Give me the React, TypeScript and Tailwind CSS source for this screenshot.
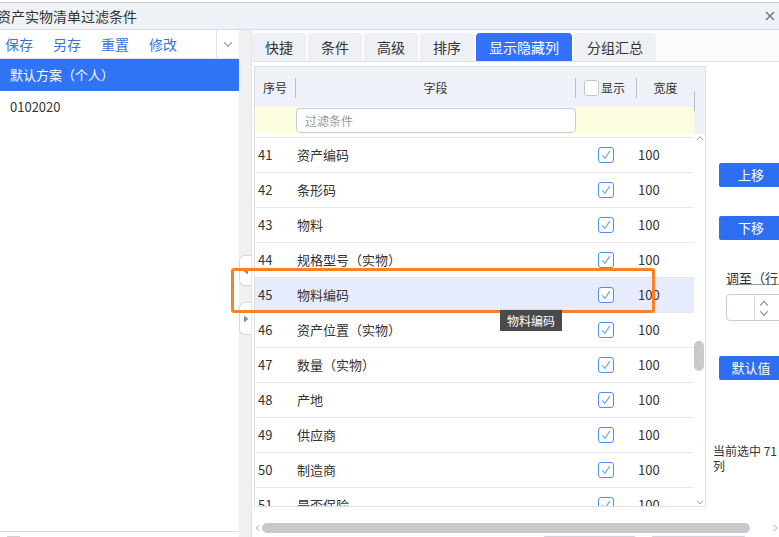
import React from "react";

const rows: [number, string][] = [
  [41, "资产编码"],
  [42, "条形码"],
  [43, "物料"],
  [44, "规格型号（实物）"],
  [45, "物料编码"],
  [46, "资产位置（实物）"],
  [47, "数量（实物）"],
  [48, "产地"],
  [49, "供应商"],
  [50, "制造商"],
  [51, "是否保险"],
];

function Check() {
  return (
    <svg width="16" height="16" viewBox="0 0 16 16">
      <rect x="0.5" y="0.5" width="15" height="15" rx="2.5" fill="white" stroke="#4d8ef7" />
      <path d="M4.2 8.4 L7 11.4 L11.8 4.2" fill="none" stroke="#6aa8ee" strokeWidth="1.2" />
    </svg>
  );
}

function Chev({ dir, color = "#9a9a9a", size = 8 }: { dir: "up" | "down" | "left" | "right"; color?: string; size?: number }) {
  const d =
    dir === "up"
      ? "M1 6 L4 2.5 L7 6"
      : dir === "down"
      ? "M1 2.5 L4 6 L7 2.5"
      : dir === "left"
      ? "M5.5 1 L2 4 L5.5 7"
      : "M2.5 1 L6 4 L2.5 7";
  return (
    <svg width={size} height={size} viewBox="0 0 8 8">
      <path d={d} fill="none" stroke={color} strokeWidth="1" />
    </svg>
  );
}

const tabs = ["快捷", "条件", "高级", "排序", "显示隐藏列", "分组汇总"];

export default function App() {
  return (
    <div className="relative flex h-[537px] w-[779px] flex-col overflow-hidden bg-white font-['Noto_Sans_CJK_SC','Liberation_Sans',sans-serif] text-[#333]">
      {/* top line */}
      <div className="h-[3px] shrink-0 border-b border-[#c9ccd3] bg-white" />
      {/* title bar */}
      <div className="flex h-[27px] shrink-0 items-center justify-between border-b border-[#d8dbe2] bg-[#eef1f7]">
        <span className="-ml-[3px] text-[14px] leading-[20px] text-[#333]">资产实物清单过滤条件</span>
        <svg width="10" height="10" viewBox="0 0 10 10" className="mr-[4px]">
          <path d="M1 1 L9 9 M9 1 L1 9" stroke="#6b6f78" strokeWidth="1.4" />
        </svg>
      </div>

      {/* body */}
      <div className="flex min-h-0 flex-1">
        {/* left panel */}
        <div className="flex w-[239px] shrink-0 flex-col bg-white">
          <div className="flex h-[29px] shrink-0 items-center border-b border-[#e3e5ea]">
            <div className="ml-[5px] flex w-[211px] items-center gap-[20px] text-[14px] leading-[20px] text-[#3a72e0]">
              <span>保存</span>
              <span>另存</span>
              <span>重置</span>
              <span>修改</span>
            </div>
            <div className="flex h-full flex-1 items-center justify-center border-l border-[#e3e5ea]">
              <Chev dir="down" color="#9aa0aa" size={10} />
            </div>
          </div>
          <div className="flex h-[32px] shrink-0 items-center bg-[#2f74f5] pl-[10px] text-[13px] leading-[18px] text-white">
            默认方案（个人）
          </div>
          <div className="flex h-[32px] shrink-0 items-center pl-[10px] text-[13px] leading-[18px] text-[#333]">
            0102020
          </div>
          <div className="flex-1 border-b border-[#dcdcdc]" />
          <div className="h-[5px] shrink-0">
            <div className="ml-[7px] mt-[4px] h-px w-[13px] bg-[#d0d0d0]" />
          </div>
        </div>

        {/* gutter */}
        <div className="w-[12px] shrink-0 bg-[#f0f0f0]" />

        {/* main */}
        <div className="flex min-w-0 flex-1 flex-col border-l border-[#e2e4ea] bg-white">
          {/* tabs */}
          <div className="flex h-[32px] shrink-0 items-end gap-[2px] border-b border-[#dcdfe6] bg-[#fbfcfe] pl-0">
            {tabs.map((t) => (
              <div
                key={t}
                className={
                  t === "显示隐藏列"
                    ? "flex h-[28px] items-center rounded-t-[4px] bg-[#3370ff] px-[13px] text-[14px] leading-[20px] text-white"
                    : "flex h-[28px] items-center rounded-t-[4px] bg-[#eef0f6] px-[13px] text-[14px] leading-[20px] text-[#333]"
                }
              >
                {t}
              </div>
            ))}
          </div>

          {/* content */}
          <div className="mt-[4px] flex h-[441px] shrink-0">
            {/* table */}
            <div className="ml-[2px] flex h-[441px] w-[452px] shrink-0 border border-[#dcdfe6] bg-white">
              <div className="flex w-[439px] flex-col">
                {/* header */}
                <div className="flex h-[40px] shrink-0 items-center bg-[#eef1f8] pt-[1px] text-[12px] leading-[16px] text-[#333]">
                  <div className="flex w-[40px] justify-center">序号</div>
                  <div className="h-[20px] w-px bg-[#b9bdc6]" />
                  <div className="flex w-[279px] justify-center">字段</div>
                  <div className="h-[20px] w-px bg-[#b9bdc6]" />
                  <div className="flex w-[60px] items-center pl-[8px]">
                    <span className="mr-[2px] inline-block h-[16px] w-[15px] rounded-[3px] border border-[#c3c6cc] bg-white" />
                    <span>显示</span>
                  </div>
                  <div className="h-[20px] w-px bg-[#b9bdc6]" />
                  <div className="flex w-[57px] justify-center">宽度</div>
                </div>
                {/* filter */}
                <div className="flex h-[27px] shrink-0 items-center bg-[#fffde0]">
                  <div className="w-[41px]" />
                  <div className="flex h-[25px] w-[280px] items-center rounded-[4px] border border-[#c8cbd1] bg-white pl-[8px] text-[12px] leading-[16px] text-[#9a9a9a]">
                    过滤条件
                  </div>
                </div>
                {/* rows */}
                <div className="min-h-0 flex-1 overflow-hidden">
                  <div className="h-[4px] border-b border-[#e4e7ed]" />
                  {rows.map(([n, name]) => (
                    <div
                      key={n}
                      className={
                        n === 45
                          ? "flex h-[35px] items-center border-b border-[#e4e7ed] bg-[#e6ecfc] text-[13px] leading-[18px] text-[#333]"
                          : "flex h-[35px] items-center border-b border-[#e4e7ed] text-[13px] leading-[18px] text-[#333]"
                      }
                    >
                      <div className="w-[40px] pl-[3px]">{n}</div>
                      <div className="w-[281px] pl-[2px]">{name}</div>
                      <div className="flex w-[60px] justify-center">
                        <Check />
                      </div>
                      <div className="w-[58px] pl-[2px]">100</div>
                    </div>
                  ))}
                </div>
              </div>
              {/* vertical scroll column */}
              <div className="flex w-[11px] flex-col">
                <div className="flex h-[67px] shrink-0 items-center bg-[#eef1f8]">
                  <div className="h-[20px] w-px bg-[#b9bdc6]" />
                </div>
                <div className="relative flex-1 bg-white">
                  <div className="absolute left-[2px] top-[0px]">
                    <Chev dir="up" size={8} color="#a0a0a0" />
                  </div>
                  <div className="absolute left-[0px] top-[207px] h-[30px] w-[10px] rounded-full bg-[#c9c9c9]" />
                  <div className="absolute bottom-[0px] left-[2px]">
                    <Chev dir="down" size={8} color="#a0a0a0" />
                  </div>
                </div>
              </div>
            </div>

            {/* right panel */}
            <div className="flex min-w-0 flex-1 flex-col">
              <div className="ml-[13px] mt-[97px] flex h-[24px] w-[64px] shrink-0 items-center justify-center rounded-[2px] bg-[#2e6ff2] text-[13px] leading-[18px] text-white">
                上移
              </div>
              <div className="ml-[13px] mt-[29px] flex h-[24px] w-[64px] shrink-0 items-center justify-center rounded-[2px] bg-[#2e6ff2] text-[13px] leading-[18px] text-white">
                下移
              </div>
              <div className="ml-[20px] mt-[30px] whitespace-nowrap text-[13px] leading-[16px] text-[#333] underline decoration-[#999]">
                调至（行）
              </div>
              <div className="ml-[20px] mt-[8px] flex h-[27px] w-[64px] shrink-0 rounded-[4px] border border-[#c8cbd1] bg-white">
                <div className="w-[28px] border-r border-[#d5d8de]" />
                <div className="flex flex-col items-center justify-center pl-[4px]">
                  <Chev dir="up" size={10} color="#9a9a9a" />
                  <Chev dir="down" size={10} color="#9a9a9a" />
                </div>
              </div>
              <div className="ml-[13px] mt-[35px] flex h-[24px] w-[64px] shrink-0 items-center justify-center rounded-[2px] bg-[#2e6ff2] text-[13px] leading-[18px] text-white">
                默认值
              </div>
              <div className="ml-[7px] mt-[63px] text-[12px] leading-[15px] text-[#333]">
                <div className="whitespace-nowrap">当前选中 71</div>
                <div>列</div>
              </div>
            </div>
          </div>

          {/* horizontal scrollbar */}
          <div className="mt-[16px] flex h-[10px] shrink-0 items-center">
            <div className="ml-[2px] flex w-[8px] items-center">
              <Chev dir="left" size={8} color="#b0b0b0" />
            </div>
            <div className="h-[10px] w-[491px] rounded-full bg-[#c9c9c9]" />
            <div className="ml-[21px]">
              <Chev dir="right" size={8} color="#b0b0b0" />
            </div>
          </div>
          <div className="mt-[3px] flex h-[12px] shrink-0">
            <div className="ml-[291px] h-[12px] w-[93px] rounded-t-[2px] border border-[#d0d3d9]" />
            <div className="ml-[15px] h-[12px] w-[95px] rounded-t-[2px] border border-[#d0d3d9]" />
          </div>
        </div>
      </div>

      {/* gutter handles (overlay) */}
      <div className="absolute left-[239px] top-[255px] flex h-[31px] w-[12px] items-center justify-center rounded-l-[6px] border border-r-0 border-[#d7d9de] bg-white">
        <svg width="6" height="8" viewBox="0 0 6 8">
          <path d="M5 0.5 L0.5 4 L5 7.5 Z" fill="#8d8d8d" />
        </svg>
      </div>
      <div className="absolute left-[239px] top-[302px] flex h-[33px] w-[12px] items-center justify-center rounded-l-[6px] border border-r-0 border-[#d7d9de] bg-white">
        <svg width="6" height="8" viewBox="0 0 6 8">
          <path d="M1 0.5 L5.5 4 L1 7.5 Z" fill="#8d8d8d" />
        </svg>
      </div>

      {/* orange highlight box */}
      <div className="absolute left-[231px] top-[268px] h-[45px] w-[424px] rounded-[3px] border-[3px] border-[#ff7f27]" />

      {/* tooltip */}
      <div className="absolute left-[500px] top-[309px] flex h-[22px] w-[62px] items-center justify-center border-t border-[#dcdcdc] bg-[#4a4a4a] text-[12px] leading-[16px] text-white">
        物料编码
      </div>
    </div>
  );
}
